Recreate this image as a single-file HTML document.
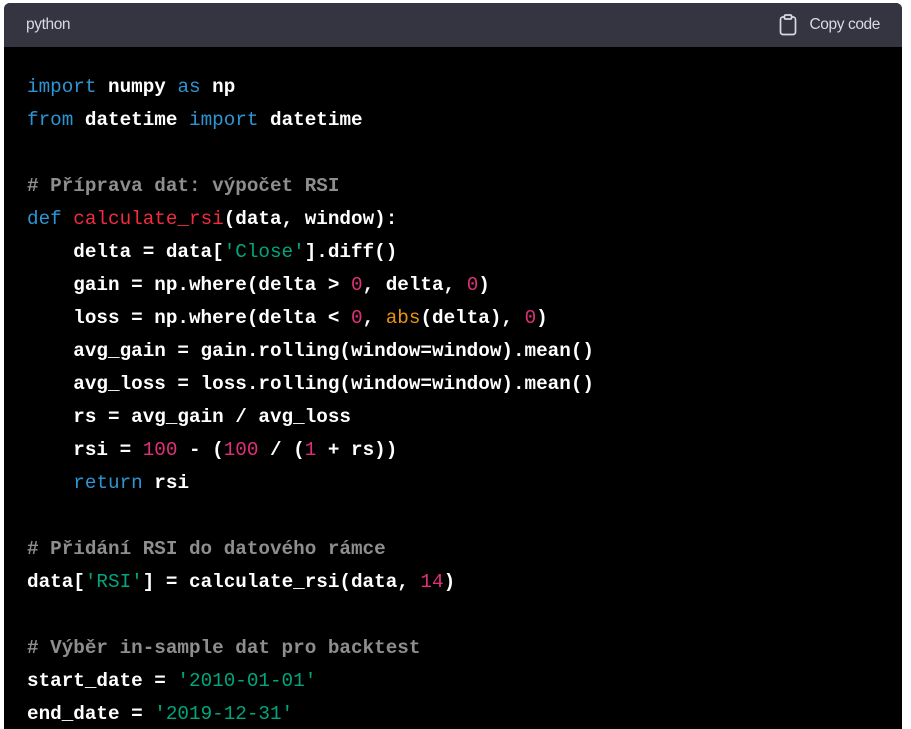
<!DOCTYPE html>
<html><head><meta charset="utf-8"><style>
html,body{margin:0;padding:0;background:#fff;width:911px;height:729px;overflow:hidden}
.card{position:absolute;left:4px;top:3px;width:898px;height:726px;background:#000;border-radius:6px 6px 0 0;overflow:hidden}
.hdr{height:44px;background:#343541;color:#d9d9e3;font-family:"Liberation Sans",sans-serif;font-size:15.5px;display:flex;align-items:center;justify-content:space-between;padding:0 22px 0 22px;letter-spacing:-0.4px}
.cp{display:flex;align-items:center;gap:12px}
pre{margin:0;position:absolute;left:23px;top:68px;font-family:"Liberation Mono",monospace;font-size:19.3px;line-height:33px;color:#fff;font-weight:bold;letter-spacing:0}
.k{color:#2e95d3;font-weight:normal}.f{color:#f22c3d;font-weight:normal}.s{color:#00a67d;font-weight:normal}.n{color:#df3079;font-weight:normal}.b{color:#e9950c;font-weight:normal}.c{color:#8e8e8e}
</style></head><body>
<div class="card">
<div class="hdr"><span>python</span><span class="cp"><svg width="18" height="22" viewBox="0 0 18 22" fill="none" stroke="#d9d9e3" stroke-width="1.7"><rect x="1.5" y="3" width="15" height="17.5" rx="2.5"/><rect x="5.5" y="1" width="7" height="4" rx="1" fill="#343541"/></svg>Copy code</span></div>
<pre><span class="k">import</span> numpy <span class="k">as</span> np
<span class="k">from</span> datetime <span class="k">import</span> datetime

<span class="c"># Příprava dat: výpočet RSI</span>
<span class="k">def</span> <span class="f">calculate_rsi</span>(data, window):
    delta = data[<span class="s">'Close'</span>].diff()
    gain = np.where(delta &gt; <span class="n">0</span>, delta, <span class="n">0</span>)
    loss = np.where(delta &lt; <span class="n">0</span>, <span class="b">abs</span>(delta), <span class="n">0</span>)
    avg_gain = gain.rolling(window=window).mean()
    avg_loss = loss.rolling(window=window).mean()
    rs = avg_gain / avg_loss
    rsi = <span class="n">100</span> - (<span class="n">100</span> / (<span class="n">1</span> + rs))
    <span class="k">return</span> rsi

<span class="c"># Přidání RSI do datového rámce</span>
data[<span class="s">'RSI'</span>] = calculate_rsi(data, <span class="n">14</span>)

<span class="c"># Výběr in-sample dat pro backtest</span>
start_date = <span class="s">'2010-01-01'</span>
end_date = <span class="s">'2019-12-31'</span></pre>
</div>
</body></html>
